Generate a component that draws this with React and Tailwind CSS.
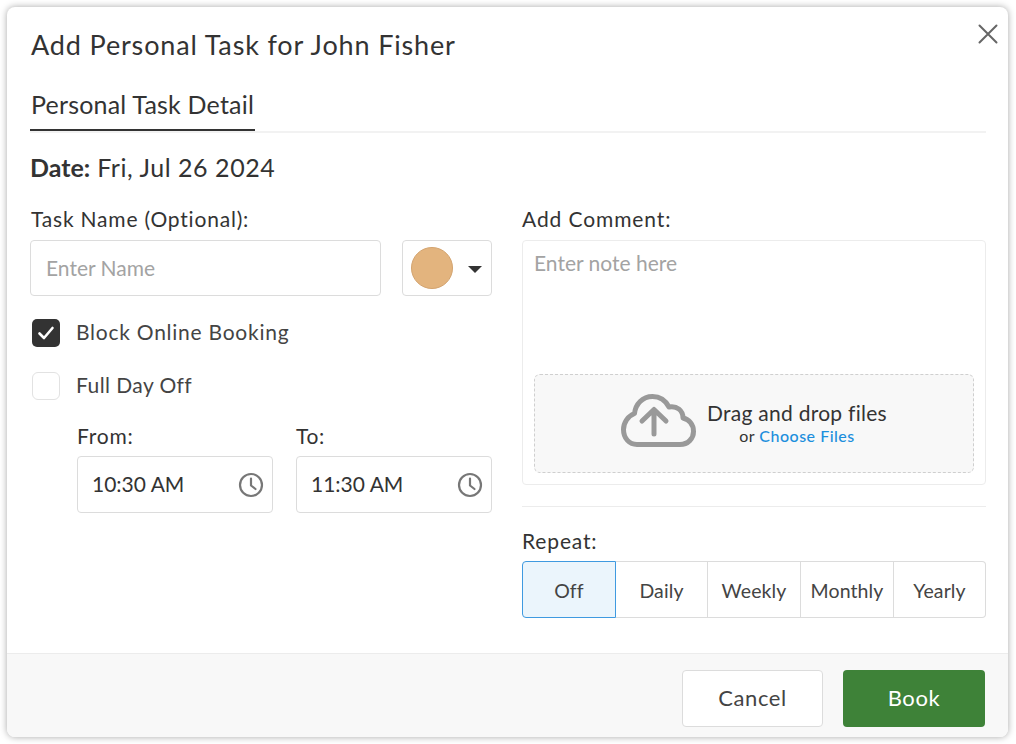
const font = { fontFamily: '"Lato", "Open Sans", sans-serif' };

function Clock() {
  return (
    <svg width="26" height="26" viewBox="0 0 26 26" fill="none" stroke="#777" strokeWidth="2.2" strokeLinecap="round" strokeLinejoin="round">
      <circle cx="13" cy="13" r="11" />
      <path d="M13 6.5V13.5L17.5 17" />
    </svg>
  );
}

function TimeField({ value }) {
  return (
    <div className="flex h-[57px] w-[196px] items-center justify-between rounded-[4px] border border-[#dcdcdc] bg-white pl-[14px] pr-[8px] text-[21px] text-[#333]">
      <span className="pb-[2px]">{value}</span>
      <Clock />
    </div>
  );
}

function Segment({ label, active, className }) {
  return (
    <div className={`flex items-center justify-center pt-[2px] text-[19.5px] tracking-[0.1px] ${className} ${active ? "rounded-l-[4px] border border-[#3f9ae0] bg-[#ebf5fc] text-[#444]" : "border-y border-r border-[#dcdcdc] bg-white text-[#444] last:rounded-r-[4px]"}`}>
      {label}
    </div>
  );
}

export default function App() {
  return (
    <div className="h-[744px] w-[1016px] overflow-hidden bg-white p-[7px]" style={font}>
      <div className="relative flex h-[730px] w-[1001px] flex-col overflow-hidden rounded-[8px] bg-white text-[#333] shadow-[0_0_7px_rgba(0,0,0,0.35)]">
        <button className="absolute right-[9px] top-[16px] text-[#666]" aria-label="Close">
          <svg width="22" height="22" viewBox="0 0 22 22" fill="none" stroke="#666" strokeWidth="2" strokeLinecap="round">
            <path d="M2.5 2.5L19.5 19.5M19.5 2.5L2.5 19.5" />
          </svg>
        </button>

        <div className="flex-1 pl-[23px] pr-[22px]">
          <h1 className="pl-px pt-[21px] text-[27px] leading-[34px] tracking-[0.85px] text-[#333]">Add Personal Task for John Fisher</h1>

          <div className="mt-[16px] h-[55px] border-b-2 border-[#f2f2f2]">
            <div className="h-[53px] w-fit border-b-2 border-[#333] px-px pt-[10px] text-[25px] leading-[32px] tracking-[0.2px] text-[#333]">Personal Task Detail</div>
          </div>

          <div className="mt-[19px] text-[25px] leading-[30px] tracking-[0.55px] text-[#333]"><b className="font-bold tracking-[0px]">Date:</b> Fri, Jul 26 2024</div>

          <div className="mt-[22px] flex gap-[30px]">
            <div className="w-[462px]">
              <div className="pl-px text-[21px] leading-[30px] tracking-[0.8px]">Task Name (Optional):</div>
              <div className="mt-[6px] flex justify-between">
                <div className="flex h-[56px] w-[351px] items-center rounded-[4px] border border-[#dcdcdc] pb-px pl-[15px] text-[21px] text-[#a3a3a3]">Enter Name</div>
                <div className="flex h-[56px] w-[90px] items-center rounded-[4px] border border-[#dcdcdc] pl-[8px]">
                  <span className="h-[42px] w-[42px] rounded-full border border-[#d3a36e] bg-[#e3b47e]" />
                  <span className="ml-[15px] mt-[3px] h-0 w-0 border-x-[7px] border-t-[7px] border-x-transparent border-t-[#333]" />
                </div>
              </div>

              <div className="mt-[23px] flex items-center pl-[2px]">
                <span className="flex h-[28px] w-[28px] items-center justify-center rounded-[5px] bg-[#333]">
                  <svg width="18" height="18" viewBox="0 0 18 18" fill="none" stroke="#fff" strokeWidth="2.6" strokeLinecap="round" strokeLinejoin="round">
                    <path d="M2.5 9.5L7 14L15.5 4" />
                  </svg>
                </span>
                <span className="ml-[16px] pb-[2px] text-[21px] leading-[26px] tracking-[0.75px] text-[#444]">Block Online Booking</span>
              </div>
              <div className="mt-[25px] flex items-center pl-[2px]">
                <span className="h-[28px] w-[28px] rounded-[6px] border border-[#e2e2e2] bg-white" />
                <span className="ml-[16px] pb-[2px] text-[21px] leading-[26px] tracking-[0.42px] text-[#444]">Full Day Off</span>
              </div>

              <div className="ml-[47px] mt-[22px] flex gap-[23px]">
                <div>
                  <div className="text-[21px] leading-[28px] tracking-[0.8px]">From:</div>
                  <div className="mt-[6px]"><TimeField value="10:30 AM" /></div>
                </div>
                <div>
                  <div className="text-[21px] leading-[28px] tracking-[0.6px]">To:</div>
                  <div className="mt-[6px]"><TimeField value="11:30 AM" /></div>
                </div>
              </div>
            </div>

            <div className="w-[464px]">
              <div className="text-[21px] leading-[30px] tracking-[0.9px]">Add Comment:</div>
              <div className="mt-[6px] flex h-[245px] flex-col justify-between rounded-[4px] border border-[#ececec] px-[11px] pb-[11px] pt-[8px]">
                <div className="text-[21px] leading-[28px] text-[#a3a3a3]">Enter note here</div>
                <div className="flex h-[99px] items-center justify-center gap-[11px] rounded-[6px] border border-dashed border-[#cfcfcf] bg-[#f8f8f8]">
                  <svg className="mb-[7px]" width="75" height="53" viewBox="0 0 75 53" fill="none" stroke="#999" strokeWidth="5" strokeLinecap="round" strokeLinejoin="round">
                    <path d="M16 50.500H59C67 50.500 72.500 44.500 72.500 37.500C72.500 30.500 68 25.500 62 24C62 16.500 56 11.500 48 13C44 5.500 38 2.500 31.500 2.500C21.500 2.500 14.500 10 13.500 19.500C7 22 2.500 28.500 2.500 35.500C2.500 44.500 8.500 50.500 16 50.500Z" />
                    <path d="M33 40V16M21 27L33 15.500L45 27" />
                  </svg>
                  <div className="text-center">
                    <div className="-mt-[1px] text-[21px] leading-[25px] tracking-[0.26px] text-[#333]">Drag and drop files</div>
                    <div className="text-[16px] leading-[22px] tracking-[0.5px] text-[#333]">or <span className="font-medium text-[#1d8fdd]">Choose Files</span></div>
                  </div>
                </div>
              </div>
              <div className="mt-[21px] border-t border-[#ececec]" />
              <div className="mt-[20px] text-[21px] leading-[28px] tracking-[0.85px]">Repeat:</div>
              <div className="mt-[6px] flex h-[57px]">
                <Segment label="Off" active className="w-[94px]" />
                <Segment label="Daily" className="w-[92px]" />
                <Segment label="Weekly" className="w-[93px]" />
                <Segment label="Monthly" className="w-[93px]" />
                <Segment label="Yearly" className="w-[92px]" />
              </div>
            </div>
          </div>
        </div>

        <div className="flex h-[84px] items-start justify-end gap-[20px] border-t border-[#ececec] bg-[#f8f8f8] pr-[23px] pt-[16px]">
          <button className="h-[57px] w-[141px] rounded-[4px] border border-[#dcdcdc] bg-white pb-[2px] text-[22px] tracking-[0.6px] text-[#444]">Cancel</button>
          <button className="h-[57px] w-[142px] rounded-[4px] bg-[#3e8238] pb-[2px] text-[22px] tracking-[0.6px] text-white">Book</button>
        </div>
      </div>
    </div>
  );
}
